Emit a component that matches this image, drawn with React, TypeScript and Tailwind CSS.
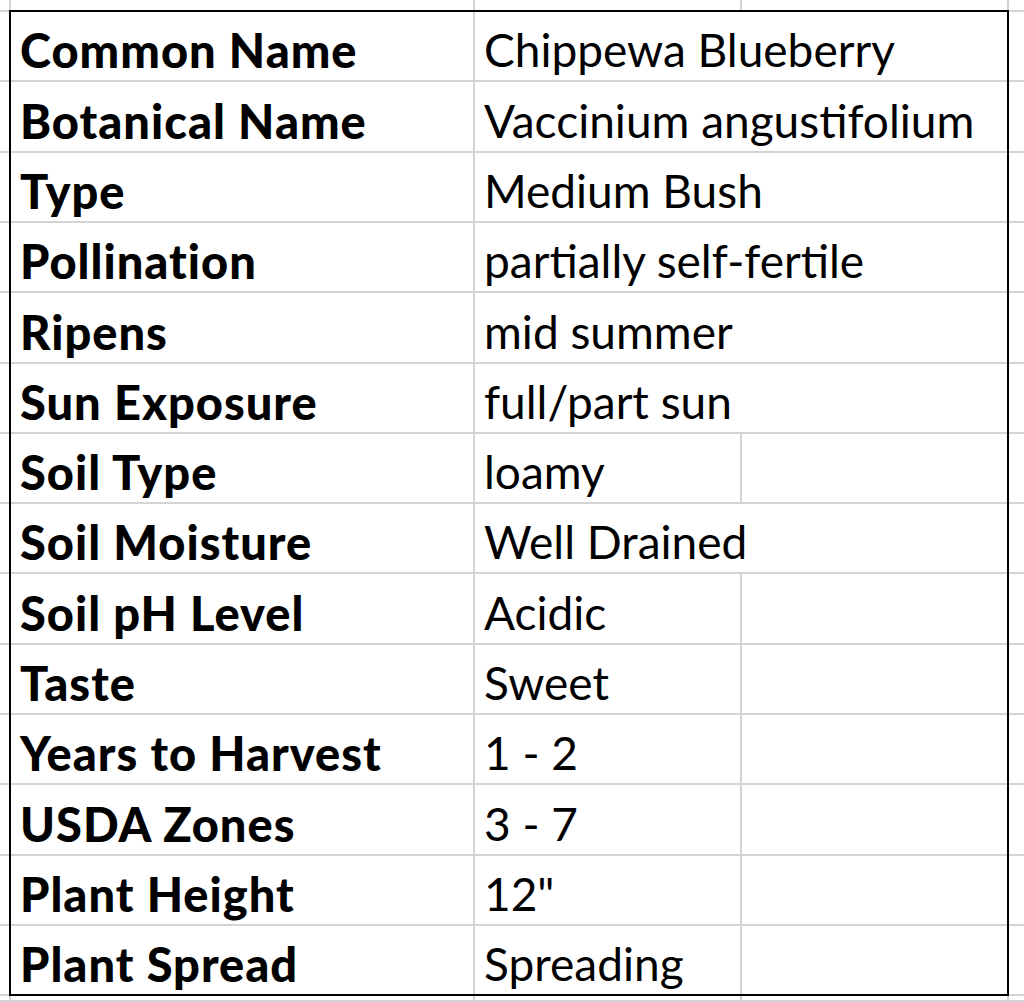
const rows = [
  { label: 'Common Name', value: 'Chippewa Blueberry', h: 'h-[70px]', spill: true },
  { label: 'Botanical Name', value: 'Vaccinium angustifolium', h: 'h-[71px]', spill: true },
  { label: 'Type', value: 'Medium Bush', h: 'h-[70px]', spill: true },
  { label: 'Pollination', value: 'partially self-fertile', h: 'h-[70px]', spill: true },
  { label: 'Ripens', value: 'mid summer', h: 'h-[71px]', spill: true },
  { label: 'Sun Exposure', value: 'full/part sun', h: 'h-[70px]', spill: true },
  { label: 'Soil Type', value: 'loamy', h: 'h-[70px]', spill: false },
  { label: 'Soil Moisture', value: 'Well Drained', h: 'h-[70px]', spill: true },
  { label: 'Soil pH Level', value: 'Acidic', h: 'h-[71px]', spill: false },
  { label: 'Taste', value: 'Sweet', h: 'h-[70px]', spill: false },
  { label: 'Years to Harvest', value: '1 - 2', h: 'h-[70px]', spill: false },
  { label: 'USDA Zones', value: '3 - 7', h: 'h-[71px]', spill: false },
  { label: 'Plant Height', value: '12"', h: 'h-[70px]', spill: false },
  { label: 'Plant Spread', value: 'Spreading', h: 'h-[70px]', spill: false },
];

// empty sheet row above / below the table
function StripRow({ h }: { h: string }) {
  return (
    <div className={`flex ${h} border-b-2 border-[#d4d4d4]`}>
      <div className="w-[11px] shrink-0 border-r-2 border-[#d4d4d4]" />
      <div className="w-[464px] shrink-0 border-r-2 border-[#d4d4d4]" />
      <div className="w-[267px] shrink-0 border-r-2 border-[#d4d4d4]" />
      <div className="w-[267px] shrink-0 border-r-2 border-[#d4d4d4]" />
      <div className="flex-1" />
    </div>
  );
}

export default function App() {
  return (
    <div className="relative w-[1024px] h-[1002px] overflow-hidden bg-white text-black font-['Lato','Liberation_Sans',sans-serif]">
      <StripRow h="h-[12px]" />

      {rows.map((row) => (
        <div key={row.label} className={`flex ${row.h} border-b-2 border-[#d4d4d4]`}>
          <div className="w-[11px] shrink-0" />
          <div className="w-[464px] shrink-0 flex items-end pl-[9px] pb-[7px] border-r-2 border-[#d4d4d4]">
            <span className="text-[47px] leading-[46px] tracking-[1px] font-black whitespace-nowrap">{row.label}</span>
          </div>
          <div
            className={`w-[267px] shrink-0 flex items-end pl-[9px] pb-[7px] ${
              row.spill ? 'border-r-2 border-transparent' : 'border-r-2 border-[#d4d4d4]'
            }`}
          >
            <span className="text-[46px] leading-[46px] whitespace-nowrap">{row.value}</span>
          </div>
          <div className="w-[267px] shrink-0 border-r-2 border-[#d4d4d4]" />
          <div className="flex-1" />
        </div>
      ))}

      <StripRow h="h-[6px]" />

      {/* black outline around the table */}
      <div className="pointer-events-none absolute left-[9px] top-[10px] w-[1000px] h-[986px] border-2 border-black" />
    </div>
  );
}
